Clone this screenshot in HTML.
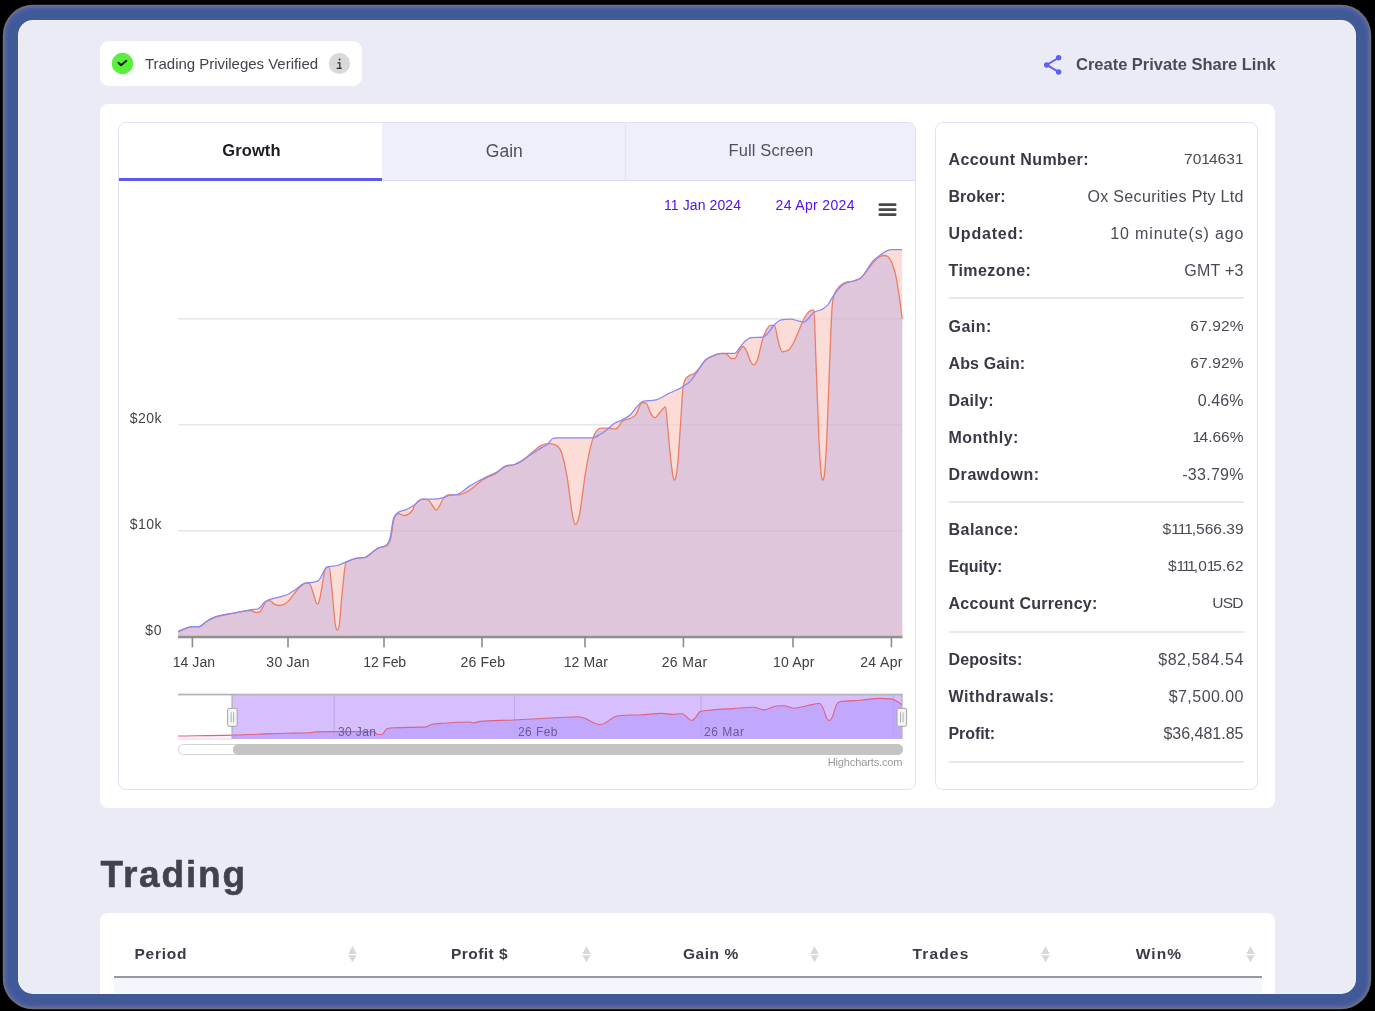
<!DOCTYPE html>
<html>
<head>
<meta charset="utf-8">
<title>Trading Dashboard</title>
<style>
*{box-sizing:border-box;margin:0;padding:0}
html,body{width:1375px;height:1011px;overflow:hidden;background:#000;font-family:"Liberation Sans",sans-serif;}
.abs{position:absolute}
#frame{position:absolute;left:5.5px;top:7.5px;width:1362px;height:998.5px;background:#3f5a97;border-radius:27px;box-shadow:inset 0 0 0 2px #4d5aa6,0 0 0 1.5px #5a6496,0 0 0 3.2px #67717f;}
#screen{position:absolute;left:18px;top:20px;width:1338px;height:974px;background:#eaebf5;border-radius:15px;overflow:hidden;}
#screen:after{content:'';position:absolute;left:0;top:0;right:0;bottom:0;border-radius:15px;box-shadow:inset 0 0 0 1px rgba(255,255,255,0.3);pointer-events:none}
/* coordinates inside #screen are page coords minus (18,20); use wrapper shifting */
#page{position:absolute;left:-18px;top:-20px;width:1375px;height:1011px;filter:blur(0.4px);}
.card{position:absolute;background:#fff;border-radius:9px;}
.t{position:absolute;white-space:nowrap;line-height:1;}
.lbl{font-weight:bold;color:#34353f;font-size:15px;}
.val{color:#44454f;font-size:15.5px;text-align:right;}
.hr{position:absolute;left:948.5px;width:295.5px;height:2px;background:#e9e9ed;}
.th{font-weight:bold;color:#3a3b46;font-size:15px;}
</style>
</head>
<body>
<div id="frame"></div>
<div id="screen"><div id="page">

<!-- verified badge -->
<div class="card" style="left:100px;top:41px;width:262px;height:45px;border-radius:9px"></div>
<svg class="abs" style="left:111px;top:52px" width="23" height="23" viewBox="0 0 23 23">
  <circle cx="11.5" cy="11.5" r="10.7" fill="#58f03a"/>
  <path d="M7.5 10.8 L10 13.3 L15.3 8.8" fill="none" stroke="#0c1a0a" stroke-width="2" stroke-linecap="round" stroke-linejoin="round"/>
</svg>
<svg class="abs" style="left:328px;top:52px" width="23" height="23" viewBox="0 0 23 23">
  <circle cx="11.5" cy="11.5" r="10.6" fill="#d9d9d9"/>
  <path d="M9.5 10.8 H11.8 V16.3 M8.6 16.4 H13.8" fill="none" stroke="#2c2c38" stroke-width="1.3"/>
  <circle cx="11.6" cy="7.5" r="0.95" fill="#2c2c38"/>
</svg>

<!-- share link -->
<svg class="abs" style="left:1042px;top:53px" width="22" height="23" viewBox="0 0 22 23">
  <path d="M16.6 4.8 L4.7 11.9 L16.6 18.9" fill="none" stroke="#5e5efa" stroke-width="1.9"/>
  <circle cx="16.6" cy="4.8" r="2.75" fill="#5e5efa"/>
  <circle cx="4.7" cy="11.9" r="2.75" fill="#5e5efa"/>
  <circle cx="16.6" cy="18.9" r="2.75" fill="#5e5efa"/>
</svg>

<!-- main card -->
<div class="card" style="left:100px;top:104px;width:1175px;height:704px;border-radius:8px"></div>

<!-- chart panel -->
<div class="abs" style="left:118px;top:122px;width:798px;height:668px;border:1px solid #e2dffc;border-radius:8px;overflow:hidden;background:#fff">
  <div class="abs" style="left:0;top:0;width:796px;height:58px;background:#efeffa;border-bottom:1px solid #dddcfb"></div>
  <div class="abs" style="left:0;top:0;width:263px;height:58px;background:#fff;border-bottom:3px solid #5a59f6"></div>
  <div class="abs" style="left:506px;top:0;width:1px;height:57px;background:#e2e1f6"></div>
</div>

<svg class="abs" style="left:0;top:0" width="1375" height="1011" viewBox="0 0 1375 1011">
<rect x="178" y="318.2" width="724" height="1.3" fill="#ededef"/>
<rect x="178" y="424.2" width="724" height="1.3" fill="#ededef"/>
<rect x="178" y="530.2" width="724" height="1.3" fill="#ededef"/>
<path d="M178.2 631.3C180.9 630.3 183.7 629.0 186.4 628.2C188.5 627.6 190.6 626.7 192.7 626.7C194.8 626.7 197.0 626.7 199.1 626.7C201.5 626.7 204.0 623.0 206.4 621.5C209.4 619.6 212.5 617.9 215.5 616.7C218.5 615.5 221.5 615.1 224.5 614.5C227.5 613.9 230.6 613.6 233.6 613.1C236.2 612.6 238.7 612.1 241.3 611.6C244.7 611.0 248.1 610.2 251.5 609.7C253.5 609.4 255.6 609.5 257.6 609.0C258.6 608.8 259.6 608.0 260.6 607.0C261.6 606.0 262.7 604.0 263.7 602.9C264.7 601.9 265.7 601.3 266.7 600.7C268.4 599.7 270.1 599.4 271.8 598.8C275.2 597.7 278.6 597.4 282.0 596.3C284.4 595.6 286.7 594.9 289.1 593.7C291.2 592.6 293.2 591.1 295.3 589.7C297.3 588.3 299.4 586.3 301.4 585.1C303.1 584.1 304.7 583.2 306.4 582.9C308.2 582.6 310.0 582.7 311.8 582.4C313.9 582.1 316.1 581.9 318.2 580.9C319.7 580.2 321.2 576.1 322.7 573.6C323.9 571.5 325.2 567.9 326.4 567.3C327.6 566.7 328.8 566.6 330.0 566.4C332.4 565.9 334.9 566.1 337.3 565.5C340.3 564.8 343.4 563.0 346.4 561.8C349.4 560.6 352.5 559.2 355.5 558.5C358.8 557.7 362.2 558.1 365.5 557.3C367.6 556.8 369.7 554.2 371.8 552.7C374.2 551.0 376.7 548.8 379.1 547.6C381.2 546.6 383.4 547.0 385.5 545.8C387.0 545.0 388.5 543.3 390.0 538.2C391.2 534.1 392.4 521.5 393.6 518.2C394.8 514.8 396.1 514.1 397.3 513.1C400.3 510.7 403.4 511.0 406.4 509.5C408.8 508.3 411.2 507.0 413.6 505.5C416.6 503.6 419.7 499.1 422.7 499.1C426.0 499.1 429.4 499.1 432.7 499.1C436.0 499.1 439.4 498.7 442.7 497.8C444.8 497.2 447.0 496.1 449.1 495.5C452.1 494.7 455.2 495.0 458.2 494.0C461.8 492.8 465.5 488.7 469.1 486.4C473.9 483.3 478.8 480.7 483.6 478.2C487.9 476.0 492.1 474.6 496.4 472.2C499.4 470.5 502.5 467.7 505.5 466.4C508.5 465.1 511.5 465.6 514.5 464.5C516.9 463.6 519.4 462.3 521.8 460.9C524.8 459.1 527.9 456.5 530.9 454.5C534.5 452.1 538.2 449.9 541.8 447.6C543.9 446.3 546.1 445.6 548.2 443.6C549.7 442.2 551.2 439.1 552.7 438.5C553.9 438.0 555.2 437.8 556.4 437.8C568.5 437.8 580.6 437.8 592.7 437.8C595.1 437.8 597.6 435.9 600.0 434.5C602.4 433.1 604.9 431.4 607.3 429.5C609.7 427.6 612.1 424.9 614.5 423.3C616.9 421.7 619.4 421.3 621.8 420.0C624.8 418.4 627.9 417.2 630.9 414.2C632.9 412.2 634.9 408.9 636.9 406.8C638.9 404.7 640.9 401.7 642.9 401.3C647.2 400.4 651.4 400.8 655.7 399.9C660.3 398.9 665.0 395.2 669.6 393.0C673.9 390.9 678.1 389.8 682.4 387.0C685.4 385.1 688.3 383.5 691.3 380.1C693.6 377.5 695.9 373.5 698.2 370.2C700.5 366.9 702.9 362.7 705.2 360.3C707.8 357.6 710.5 356.9 713.1 355.8C716.1 354.5 719.0 353.4 722.0 353.4C726.3 353.4 730.5 353.4 734.8 353.4C736.5 353.4 738.1 349.5 739.8 347.5C741.4 345.5 743.1 343.1 744.7 341.5C747.0 339.3 749.3 337.8 751.6 337.6C755.2 337.3 758.9 337.5 762.5 337.2C764.5 337.1 766.4 334.7 768.4 332.6C770.4 330.5 772.4 326.8 774.4 324.7C776.7 322.3 779.0 320.1 781.3 319.8C784.3 319.4 787.2 319.2 790.2 319.2C792.8 319.2 795.5 320.2 798.1 320.8C800.1 321.2 802.0 322.2 804.0 322.2C805.7 322.2 807.3 319.5 809.0 317.8C810.6 316.2 812.3 313.4 813.9 312.3C816.6 310.4 819.2 311.1 821.9 309.5C823.9 308.3 825.8 307.3 827.8 304.9C829.7 302.7 831.5 298.6 833.4 295.9C835.4 293.0 837.3 290.2 839.3 288.1C841.7 285.6 844.1 284.0 846.5 282.8C848.9 281.6 851.2 281.8 853.6 281.0C856.0 280.2 858.3 280.0 860.7 278.1C862.7 276.5 864.6 273.1 866.6 270.3C868.6 267.5 870.6 263.8 872.6 261.4C875.0 258.6 877.3 257.3 879.7 255.5C882.1 253.7 884.4 251.8 886.8 250.8C888.4 250.1 889.9 249.6 891.5 249.6C895.1 249.6 898.6 249.6 902.2 249.6L902.2 636.0L178.2 636.0Z" fill="#fbdcd7"/>
<path d="M178.2 631.8C180.9 630.6 183.7 629.1 186.4 628.2C188.5 627.5 190.6 626.7 192.7 626.7C194.8 626.7 197.0 626.7 199.1 626.7C201.5 626.7 204.0 623.0 206.4 621.5C209.4 619.7 212.5 618.3 215.5 617.2C218.5 616.1 221.5 615.7 224.5 615.0C227.5 614.3 230.6 613.7 233.6 613.1C236.2 612.6 238.7 612.0 241.3 611.6C244.3 611.1 247.4 610.5 250.4 610.5C252.5 610.5 254.5 612.6 256.6 612.6C257.8 612.6 258.9 612.3 260.1 611.6C261.0 611.1 261.8 609.0 262.7 607.5C263.5 606.1 264.4 604.0 265.2 602.9C266.0 601.9 266.7 600.9 267.5 600.9C268.4 600.9 269.4 600.9 270.3 600.9C271.5 600.9 272.7 603.2 273.9 603.9C275.6 605.0 277.3 605.5 279.0 605.5C280.7 605.5 282.3 605.1 284.0 604.4C285.7 603.7 287.4 602.2 289.1 600.4C290.6 598.8 292.2 596.2 293.7 594.3C295.2 592.3 296.8 590.4 298.3 588.7C299.7 587.2 301.0 585.6 302.4 584.6C303.4 583.9 304.4 583.1 305.4 583.1C306.6 583.1 307.9 583.2 309.1 583.4C310.6 583.6 312.0 589.7 313.5 594.0C314.4 596.7 315.3 601.3 316.2 602.8C316.7 603.5 317.1 604.0 317.6 604.0C318.0 604.0 318.5 603.4 318.9 602.3C319.8 600.2 320.6 594.4 321.5 590.0C322.8 583.3 324.2 569.2 325.5 568.2C326.7 567.3 327.9 566.9 329.1 566.9C330.1 566.9 331.0 581.4 332.0 590.0C333.2 600.9 334.5 622.4 335.7 627.0C336.2 629.0 336.8 630.0 337.3 630.0C337.8 630.0 338.3 629.0 338.9 627.0C339.9 622.9 341.0 604.7 342.0 595.0C343.3 582.7 344.7 563.9 346.0 562.7C349.2 559.9 352.3 559.3 355.5 558.5C358.8 557.7 362.2 558.1 365.5 557.3C367.6 556.8 369.7 554.2 371.8 552.7C374.2 551.0 376.7 548.4 379.1 547.6C381.2 546.9 383.4 547.2 385.5 546.5C387.2 545.9 388.8 544.0 390.5 539.0C391.7 535.5 392.8 522.0 394.0 519.0C395.4 515.4 396.8 513.6 398.2 513.6C400.3 513.6 402.4 515.5 404.5 515.5C407.2 515.5 410.0 513.7 412.7 510.0C413.3 509.2 413.9 506.4 414.5 505.5C417.2 501.2 420.0 499.1 422.7 499.1C424.5 499.1 426.4 499.4 428.2 500.0C430.4 500.7 432.6 506.9 434.8 508.8C435.3 509.3 435.9 510.0 436.4 510.0C436.9 510.0 437.5 509.2 438.0 508.6C439.9 506.5 441.7 500.5 443.6 498.2C445.1 496.3 446.7 494.9 448.2 494.9C451.5 494.9 454.9 494.9 458.2 494.9C461.8 494.9 465.5 492.6 469.1 490.5C473.9 487.8 478.8 482.1 483.6 479.1C487.9 476.5 492.1 475.9 496.4 473.1C499.4 471.1 502.5 467.0 505.5 466.0C508.5 465.0 511.5 465.5 514.5 464.5C516.9 463.7 519.4 462.4 521.8 460.9C524.8 459.0 527.9 455.9 530.9 453.5C534.5 450.6 538.2 446.7 541.8 445.1C543.9 444.2 546.1 443.6 548.2 443.6C550.3 443.6 552.4 443.9 554.5 444.5C556.3 445.0 558.2 446.0 560.0 449.1C562.4 453.2 564.9 464.2 567.3 478.2C569.1 488.6 570.9 508.0 572.7 516.4C573.3 519.3 574.0 522.3 574.6 523.5C574.9 524.1 575.2 524.5 575.5 524.5C575.9 524.5 576.3 524.1 576.7 523.5C577.5 522.3 578.3 519.6 579.1 516.4C581.2 507.8 583.4 485.1 585.5 472.7C587.9 458.8 590.3 446.4 592.7 439.1C593.9 435.3 595.2 432.4 596.4 430.9C597.9 429.1 599.4 428.2 600.9 428.2C603.0 428.2 605.2 428.2 607.3 428.2C610.0 428.2 612.8 429.1 615.5 429.1C617.9 429.1 620.3 422.6 622.7 420.9C626.0 418.5 629.4 419.6 632.7 417.3C633.8 416.6 634.8 416.0 635.9 414.7C637.9 412.3 639.9 402.8 641.9 402.8C643.2 402.8 644.5 402.8 645.8 402.8C647.5 402.8 649.1 411.1 650.8 413.7C652.1 415.7 653.4 417.7 654.7 417.7C656.4 417.7 658.0 414.4 659.7 412.7C661.7 410.7 663.6 406.8 665.6 406.8C666.3 406.8 666.9 419.9 667.6 426.6C668.9 439.6 670.2 456.4 671.5 466.1C672.2 471.1 672.8 476.2 673.5 478.3C673.8 479.4 674.2 480.0 674.5 480.0C674.8 480.0 675.2 479.4 675.5 478.3C676.2 476.2 676.8 472.2 677.5 466.1C678.5 457.2 679.4 440.4 680.4 426.6C681.3 414.2 682.1 394.4 683.0 388.0C683.8 382.1 684.6 380.5 685.4 379.1C686.7 376.8 688.0 376.5 689.3 375.6C691.0 374.5 692.6 374.9 694.3 373.6C695.9 372.4 697.6 370.2 699.2 368.2C701.2 365.8 703.2 362.3 705.2 360.3C707.8 357.7 710.5 356.9 713.1 355.8C716.1 354.5 719.0 353.4 722.0 353.4C723.6 353.4 725.3 353.7 726.9 354.4C728.2 354.9 729.6 358.0 730.9 358.3C732.2 358.6 733.5 358.7 734.8 358.7C736.1 358.7 737.5 353.4 738.8 351.4C740.2 349.3 741.7 346.5 743.1 346.5C744.3 346.5 745.5 349.1 746.7 351.4C748.0 353.9 749.3 359.0 750.6 361.3C751.6 363.1 752.6 364.9 753.6 364.9C754.9 364.9 756.3 362.7 757.6 359.3C759.2 355.1 760.9 344.8 762.5 339.6C763.8 335.4 765.2 332.1 766.5 329.7C767.8 327.4 769.1 325.3 770.4 325.3C771.7 325.3 773.1 325.3 774.4 325.3C775.7 325.3 777.0 337.1 778.3 341.5C779.6 346.0 781.0 351.8 782.3 351.8C784.3 351.8 786.2 351.3 788.2 350.4C790.2 349.5 792.2 345.3 794.2 341.5C796.2 337.7 798.1 332.2 800.1 327.7C801.7 324.0 803.4 319.6 805.0 316.8C806.7 314.0 808.3 311.8 810.0 310.9C811.3 310.2 812.6 309.9 813.9 309.9C814.6 309.9 815.2 342.4 815.9 359.3C816.9 384.7 817.9 418.2 818.9 438.4C819.8 456.0 820.6 472.9 821.5 477.0C821.9 479.0 822.4 480.0 822.8 480.0C823.2 480.0 823.7 479.0 824.1 477.0C825.0 472.9 825.9 456.3 826.8 438.4C827.8 418.4 828.8 383.4 829.8 359.3C830.6 340.0 831.4 315.3 832.2 305.9C832.8 298.8 833.4 297.7 834.0 295.3C835.0 291.3 836.0 290.9 837.0 289.3C838.6 286.8 840.1 285.8 841.7 284.6C843.3 283.4 844.9 282.7 846.5 282.2C848.9 281.4 851.2 281.7 853.6 281.0C856.0 280.3 858.3 280.0 860.7 278.1C862.7 276.5 864.6 273.5 866.6 271.0C868.6 268.5 870.6 265.4 872.6 263.2C875.0 260.5 877.3 257.9 879.7 256.7C881.3 255.9 882.8 255.5 884.4 255.5C885.6 255.5 886.8 255.9 888.0 256.7C889.2 257.5 890.3 259.4 891.5 262.0C892.7 264.7 893.9 267.6 895.1 272.7C896.3 277.8 897.5 285.0 898.7 292.9C899.9 300.5 901.0 310.3 902.2 319.0L902.2 636.0L178.2 636.0Z" fill="#dfc6da"/>
<rect x="178" y="318.2" width="724" height="1.3" fill="#000" opacity="0.04"/>
<rect x="178" y="424.2" width="724" height="1.3" fill="#000" opacity="0.04"/>
<rect x="178" y="530.2" width="724" height="1.3" fill="#000" opacity="0.04"/>
<path d="M178.2 631.8C180.9 630.6 183.7 629.1 186.4 628.2C188.5 627.5 190.6 626.7 192.7 626.7C194.8 626.7 197.0 626.7 199.1 626.7C201.5 626.7 204.0 623.0 206.4 621.5C209.4 619.7 212.5 618.3 215.5 617.2C218.5 616.1 221.5 615.7 224.5 615.0C227.5 614.3 230.6 613.7 233.6 613.1C236.2 612.6 238.7 612.0 241.3 611.6C244.3 611.1 247.4 610.5 250.4 610.5C252.5 610.5 254.5 612.6 256.6 612.6C257.8 612.6 258.9 612.3 260.1 611.6C261.0 611.1 261.8 609.0 262.7 607.5C263.5 606.1 264.4 604.0 265.2 602.9C266.0 601.9 266.7 600.9 267.5 600.9C268.4 600.9 269.4 600.9 270.3 600.9C271.5 600.9 272.7 603.2 273.9 603.9C275.6 605.0 277.3 605.5 279.0 605.5C280.7 605.5 282.3 605.1 284.0 604.4C285.7 603.7 287.4 602.2 289.1 600.4C290.6 598.8 292.2 596.2 293.7 594.3C295.2 592.3 296.8 590.4 298.3 588.7C299.7 587.2 301.0 585.6 302.4 584.6C303.4 583.9 304.4 583.1 305.4 583.1C306.6 583.1 307.9 583.2 309.1 583.4C310.6 583.6 312.0 589.7 313.5 594.0C314.4 596.7 315.3 601.3 316.2 602.8C316.7 603.5 317.1 604.0 317.6 604.0C318.0 604.0 318.5 603.4 318.9 602.3C319.8 600.2 320.6 594.4 321.5 590.0C322.8 583.3 324.2 569.2 325.5 568.2C326.7 567.3 327.9 566.9 329.1 566.9C330.1 566.9 331.0 581.4 332.0 590.0C333.2 600.9 334.5 622.4 335.7 627.0C336.2 629.0 336.8 630.0 337.3 630.0C337.8 630.0 338.3 629.0 338.9 627.0C339.9 622.9 341.0 604.7 342.0 595.0C343.3 582.7 344.7 563.9 346.0 562.7C349.2 559.9 352.3 559.3 355.5 558.5C358.8 557.7 362.2 558.1 365.5 557.3C367.6 556.8 369.7 554.2 371.8 552.7C374.2 551.0 376.7 548.4 379.1 547.6C381.2 546.9 383.4 547.2 385.5 546.5C387.2 545.9 388.8 544.0 390.5 539.0C391.7 535.5 392.8 522.0 394.0 519.0C395.4 515.4 396.8 513.6 398.2 513.6C400.3 513.6 402.4 515.5 404.5 515.5C407.2 515.5 410.0 513.7 412.7 510.0C413.3 509.2 413.9 506.4 414.5 505.5C417.2 501.2 420.0 499.1 422.7 499.1C424.5 499.1 426.4 499.4 428.2 500.0C430.4 500.7 432.6 506.9 434.8 508.8C435.3 509.3 435.9 510.0 436.4 510.0C436.9 510.0 437.5 509.2 438.0 508.6C439.9 506.5 441.7 500.5 443.6 498.2C445.1 496.3 446.7 494.9 448.2 494.9C451.5 494.9 454.9 494.9 458.2 494.9C461.8 494.9 465.5 492.6 469.1 490.5C473.9 487.8 478.8 482.1 483.6 479.1C487.9 476.5 492.1 475.9 496.4 473.1C499.4 471.1 502.5 467.0 505.5 466.0C508.5 465.0 511.5 465.5 514.5 464.5C516.9 463.7 519.4 462.4 521.8 460.9C524.8 459.0 527.9 455.9 530.9 453.5C534.5 450.6 538.2 446.7 541.8 445.1C543.9 444.2 546.1 443.6 548.2 443.6C550.3 443.6 552.4 443.9 554.5 444.5C556.3 445.0 558.2 446.0 560.0 449.1C562.4 453.2 564.9 464.2 567.3 478.2C569.1 488.6 570.9 508.0 572.7 516.4C573.3 519.3 574.0 522.3 574.6 523.5C574.9 524.1 575.2 524.5 575.5 524.5C575.9 524.5 576.3 524.1 576.7 523.5C577.5 522.3 578.3 519.6 579.1 516.4C581.2 507.8 583.4 485.1 585.5 472.7C587.9 458.8 590.3 446.4 592.7 439.1C593.9 435.3 595.2 432.4 596.4 430.9C597.9 429.1 599.4 428.2 600.9 428.2C603.0 428.2 605.2 428.2 607.3 428.2C610.0 428.2 612.8 429.1 615.5 429.1C617.9 429.1 620.3 422.6 622.7 420.9C626.0 418.5 629.4 419.6 632.7 417.3C633.8 416.6 634.8 416.0 635.9 414.7C637.9 412.3 639.9 402.8 641.9 402.8C643.2 402.8 644.5 402.8 645.8 402.8C647.5 402.8 649.1 411.1 650.8 413.7C652.1 415.7 653.4 417.7 654.7 417.7C656.4 417.7 658.0 414.4 659.7 412.7C661.7 410.7 663.6 406.8 665.6 406.8C666.3 406.8 666.9 419.9 667.6 426.6C668.9 439.6 670.2 456.4 671.5 466.1C672.2 471.1 672.8 476.2 673.5 478.3C673.8 479.4 674.2 480.0 674.5 480.0C674.8 480.0 675.2 479.4 675.5 478.3C676.2 476.2 676.8 472.2 677.5 466.1C678.5 457.2 679.4 440.4 680.4 426.6C681.3 414.2 682.1 394.4 683.0 388.0C683.8 382.1 684.6 380.5 685.4 379.1C686.7 376.8 688.0 376.5 689.3 375.6C691.0 374.5 692.6 374.9 694.3 373.6C695.9 372.4 697.6 370.2 699.2 368.2C701.2 365.8 703.2 362.3 705.2 360.3C707.8 357.7 710.5 356.9 713.1 355.8C716.1 354.5 719.0 353.4 722.0 353.4C723.6 353.4 725.3 353.7 726.9 354.4C728.2 354.9 729.6 358.0 730.9 358.3C732.2 358.6 733.5 358.7 734.8 358.7C736.1 358.7 737.5 353.4 738.8 351.4C740.2 349.3 741.7 346.5 743.1 346.5C744.3 346.5 745.5 349.1 746.7 351.4C748.0 353.9 749.3 359.0 750.6 361.3C751.6 363.1 752.6 364.9 753.6 364.9C754.9 364.9 756.3 362.7 757.6 359.3C759.2 355.1 760.9 344.8 762.5 339.6C763.8 335.4 765.2 332.1 766.5 329.7C767.8 327.4 769.1 325.3 770.4 325.3C771.7 325.3 773.1 325.3 774.4 325.3C775.7 325.3 777.0 337.1 778.3 341.5C779.6 346.0 781.0 351.8 782.3 351.8C784.3 351.8 786.2 351.3 788.2 350.4C790.2 349.5 792.2 345.3 794.2 341.5C796.2 337.7 798.1 332.2 800.1 327.7C801.7 324.0 803.4 319.6 805.0 316.8C806.7 314.0 808.3 311.8 810.0 310.9C811.3 310.2 812.6 309.9 813.9 309.9C814.6 309.9 815.2 342.4 815.9 359.3C816.9 384.7 817.9 418.2 818.9 438.4C819.8 456.0 820.6 472.9 821.5 477.0C821.9 479.0 822.4 480.0 822.8 480.0C823.2 480.0 823.7 479.0 824.1 477.0C825.0 472.9 825.9 456.3 826.8 438.4C827.8 418.4 828.8 383.4 829.8 359.3C830.6 340.0 831.4 315.3 832.2 305.9C832.8 298.8 833.4 297.7 834.0 295.3C835.0 291.3 836.0 290.9 837.0 289.3C838.6 286.8 840.1 285.8 841.7 284.6C843.3 283.4 844.9 282.7 846.5 282.2C848.9 281.4 851.2 281.7 853.6 281.0C856.0 280.3 858.3 280.0 860.7 278.1C862.7 276.5 864.6 273.5 866.6 271.0C868.6 268.5 870.6 265.4 872.6 263.2C875.0 260.5 877.3 257.9 879.7 256.7C881.3 255.9 882.8 255.5 884.4 255.5C885.6 255.5 886.8 255.9 888.0 256.7C889.2 257.5 890.3 259.4 891.5 262.0C892.7 264.7 893.9 267.6 895.1 272.7C896.3 277.8 897.5 285.0 898.7 292.9C899.9 300.5 901.0 310.3 902.2 319.0" fill="none" stroke="#ec7d67" stroke-width="1.3" stroke-linejoin="round"/>
<path d="M178.2 631.3C180.9 630.3 183.7 629.0 186.4 628.2C188.5 627.6 190.6 626.7 192.7 626.7C194.8 626.7 197.0 626.7 199.1 626.7C201.5 626.7 204.0 623.0 206.4 621.5C209.4 619.6 212.5 617.9 215.5 616.7C218.5 615.5 221.5 615.1 224.5 614.5C227.5 613.9 230.6 613.6 233.6 613.1C236.2 612.6 238.7 612.1 241.3 611.6C244.7 611.0 248.1 610.2 251.5 609.7C253.5 609.4 255.6 609.5 257.6 609.0C258.6 608.8 259.6 608.0 260.6 607.0C261.6 606.0 262.7 604.0 263.7 602.9C264.7 601.9 265.7 601.3 266.7 600.7C268.4 599.7 270.1 599.4 271.8 598.8C275.2 597.7 278.6 597.4 282.0 596.3C284.4 595.6 286.7 594.9 289.1 593.7C291.2 592.6 293.2 591.1 295.3 589.7C297.3 588.3 299.4 586.3 301.4 585.1C303.1 584.1 304.7 583.2 306.4 582.9C308.2 582.6 310.0 582.7 311.8 582.4C313.9 582.1 316.1 581.9 318.2 580.9C319.7 580.2 321.2 576.1 322.7 573.6C323.9 571.5 325.2 567.9 326.4 567.3C327.6 566.7 328.8 566.6 330.0 566.4C332.4 565.9 334.9 566.1 337.3 565.5C340.3 564.8 343.4 563.0 346.4 561.8C349.4 560.6 352.5 559.2 355.5 558.5C358.8 557.7 362.2 558.1 365.5 557.3C367.6 556.8 369.7 554.2 371.8 552.7C374.2 551.0 376.7 548.8 379.1 547.6C381.2 546.6 383.4 547.0 385.5 545.8C387.0 545.0 388.5 543.3 390.0 538.2C391.2 534.1 392.4 521.5 393.6 518.2C394.8 514.8 396.1 514.1 397.3 513.1C400.3 510.7 403.4 511.0 406.4 509.5C408.8 508.3 411.2 507.0 413.6 505.5C416.6 503.6 419.7 499.1 422.7 499.1C426.0 499.1 429.4 499.1 432.7 499.1C436.0 499.1 439.4 498.7 442.7 497.8C444.8 497.2 447.0 496.1 449.1 495.5C452.1 494.7 455.2 495.0 458.2 494.0C461.8 492.8 465.5 488.7 469.1 486.4C473.9 483.3 478.8 480.7 483.6 478.2C487.9 476.0 492.1 474.6 496.4 472.2C499.4 470.5 502.5 467.7 505.5 466.4C508.5 465.1 511.5 465.6 514.5 464.5C516.9 463.6 519.4 462.3 521.8 460.9C524.8 459.1 527.9 456.5 530.9 454.5C534.5 452.1 538.2 449.9 541.8 447.6C543.9 446.3 546.1 445.6 548.2 443.6C549.7 442.2 551.2 439.1 552.7 438.5C553.9 438.0 555.2 437.8 556.4 437.8C568.5 437.8 580.6 437.8 592.7 437.8C595.1 437.8 597.6 435.9 600.0 434.5C602.4 433.1 604.9 431.4 607.3 429.5C609.7 427.6 612.1 424.9 614.5 423.3C616.9 421.7 619.4 421.3 621.8 420.0C624.8 418.4 627.9 417.2 630.9 414.2C632.9 412.2 634.9 408.9 636.9 406.8C638.9 404.7 640.9 401.7 642.9 401.3C647.2 400.4 651.4 400.8 655.7 399.9C660.3 398.9 665.0 395.2 669.6 393.0C673.9 390.9 678.1 389.8 682.4 387.0C685.4 385.1 688.3 383.5 691.3 380.1C693.6 377.5 695.9 373.5 698.2 370.2C700.5 366.9 702.9 362.7 705.2 360.3C707.8 357.6 710.5 356.9 713.1 355.8C716.1 354.5 719.0 353.4 722.0 353.4C726.3 353.4 730.5 353.4 734.8 353.4C736.5 353.4 738.1 349.5 739.8 347.5C741.4 345.5 743.1 343.1 744.7 341.5C747.0 339.3 749.3 337.8 751.6 337.6C755.2 337.3 758.9 337.5 762.5 337.2C764.5 337.1 766.4 334.7 768.4 332.6C770.4 330.5 772.4 326.8 774.4 324.7C776.7 322.3 779.0 320.1 781.3 319.8C784.3 319.4 787.2 319.2 790.2 319.2C792.8 319.2 795.5 320.2 798.1 320.8C800.1 321.2 802.0 322.2 804.0 322.2C805.7 322.2 807.3 319.5 809.0 317.8C810.6 316.2 812.3 313.4 813.9 312.3C816.6 310.4 819.2 311.1 821.9 309.5C823.9 308.3 825.8 307.3 827.8 304.9C829.7 302.7 831.5 298.6 833.4 295.9C835.4 293.0 837.3 290.2 839.3 288.1C841.7 285.6 844.1 284.0 846.5 282.8C848.9 281.6 851.2 281.8 853.6 281.0C856.0 280.2 858.3 280.0 860.7 278.1C862.7 276.5 864.6 273.1 866.6 270.3C868.6 267.5 870.6 263.8 872.6 261.4C875.0 258.6 877.3 257.3 879.7 255.5C882.1 253.7 884.4 251.8 886.8 250.8C888.4 250.1 889.9 249.6 891.5 249.6C895.1 249.6 898.6 249.6 902.2 249.6" fill="none" stroke="#8988f3" stroke-width="1.25" stroke-linejoin="round"/>
<rect x="178" y="635.8" width="724.5" height="2.5" fill="#909090"/>
<rect x="191.6" y="636" width="1.6" height="11.3" fill="#8c8c8c"/>
<rect x="287.2" y="636" width="1.6" height="11.3" fill="#8c8c8c"/>
<rect x="383.2" y="636" width="1.6" height="11.3" fill="#8c8c8c"/>
<rect x="481.2" y="636" width="1.6" height="11.3" fill="#8c8c8c"/>
<rect x="584.2" y="636" width="1.6" height="11.3" fill="#8c8c8c"/>
<rect x="682.6" y="636" width="1.6" height="11.3" fill="#8c8c8c"/>
<rect x="792.2" y="636" width="1.6" height="11.3" fill="#8c8c8c"/>
<rect x="890.6" y="636" width="1.6" height="11.3" fill="#8c8c8c"/>
<rect x="178" y="694" width="724" height="45" fill="#fff"/>
<path d="M178.0 736.0C196.2 735.7 214.3 735.6 232.5 735.1C240.8 734.9 249.0 734.5 257.3 734.2C267.0 733.9 276.7 733.5 286.4 733.3C294.1 733.1 301.9 733.1 309.6 732.8C311.6 732.7 313.5 732.0 315.5 731.9C321.3 731.7 327.1 731.6 332.9 731.6C346.5 731.6 360.0 731.6 373.6 731.6C375.1 731.6 376.5 734.5 378.0 734.5C379.5 734.5 380.9 734.4 382.4 734.2C383.8 734.0 385.3 729.1 386.7 728.7C389.1 728.1 391.6 727.9 394.0 727.8C404.7 727.2 415.3 727.5 426.0 726.9C427.9 726.8 429.9 724.7 431.8 724.3C435.7 723.6 439.6 723.5 443.5 723.2C452.2 722.5 460.9 722.0 469.6 722.0C471.1 722.0 472.5 722.9 474.0 722.9C475.9 722.9 477.9 721.6 479.8 721.4C491.0 720.5 502.1 720.5 513.3 720.0C528.9 719.3 544.4 718.2 560.0 717.5C565.9 717.2 571.9 716.7 577.8 716.7C580.4 716.7 582.9 717.5 585.5 718.5C588.0 719.5 590.6 721.6 593.1 722.6C595.4 723.5 597.7 724.6 600.0 724.6C602.4 724.6 604.7 723.0 607.1 721.8C609.6 720.5 612.2 717.7 614.7 716.7C616.8 715.9 619.0 715.7 621.1 715.5C627.9 715.0 634.7 715.1 641.5 714.7C648.3 714.4 655.0 713.4 661.8 713.4C665.2 713.4 668.6 714.4 672.0 714.4C675.4 714.4 678.8 713.7 682.2 713.7C683.9 713.7 685.6 716.3 687.3 717.5C688.7 718.5 690.2 720.5 691.6 720.5C693.1 720.5 694.7 718.4 696.2 716.7C697.5 715.3 698.7 711.9 700.0 711.6C704.2 710.5 708.5 710.4 712.7 709.9C719.5 709.2 726.3 709.0 733.1 708.6C739.9 708.2 746.7 707.3 753.5 707.3C756.9 707.3 760.2 709.9 763.6 709.9C767.9 709.9 772.1 706.2 776.4 706.0C778.9 705.9 781.5 705.8 784.0 705.8C787.4 705.8 790.8 708.3 794.2 708.3C798.4 708.3 802.7 706.6 806.9 705.8C811.1 705.0 815.4 703.5 819.6 703.5C820.9 703.5 822.2 706.2 823.5 709.1C824.6 711.5 825.7 716.7 826.8 718.5C827.6 719.8 828.5 720.5 829.3 720.5C830.3 720.5 831.4 718.8 832.4 716.7C833.7 714.1 834.9 707.8 836.2 705.3C837.5 702.8 838.7 701.7 840.0 701.5C846.8 700.6 853.6 700.7 860.4 700.2C867.2 699.7 873.9 698.4 880.7 698.4C884.1 698.4 887.5 698.6 890.9 698.9C893.0 699.1 895.2 700.3 897.3 701.5C898.9 702.4 900.4 703.7 902.0 704.8L902.0 739.0L178.0 739.0Z" fill="#fbf4fa"/>
<rect x="232" y="694" width="670" height="45" fill="#d7befd"/>
<clipPath id="nc"><rect x="232" y="694" width="670" height="45"/></clipPath>
<path d="M178.0 736.0C196.2 735.7 214.3 735.6 232.5 735.1C240.8 734.9 249.0 734.5 257.3 734.2C267.0 733.9 276.7 733.5 286.4 733.3C294.1 733.1 301.9 733.1 309.6 732.8C311.6 732.7 313.5 732.0 315.5 731.9C321.3 731.7 327.1 731.6 332.9 731.6C346.5 731.6 360.0 731.6 373.6 731.6C375.1 731.6 376.5 734.5 378.0 734.5C379.5 734.5 380.9 734.4 382.4 734.2C383.8 734.0 385.3 729.1 386.7 728.7C389.1 728.1 391.6 727.9 394.0 727.8C404.7 727.2 415.3 727.5 426.0 726.9C427.9 726.8 429.9 724.7 431.8 724.3C435.7 723.6 439.6 723.5 443.5 723.2C452.2 722.5 460.9 722.0 469.6 722.0C471.1 722.0 472.5 722.9 474.0 722.9C475.9 722.9 477.9 721.6 479.8 721.4C491.0 720.5 502.1 720.5 513.3 720.0C528.9 719.3 544.4 718.2 560.0 717.5C565.9 717.2 571.9 716.7 577.8 716.7C580.4 716.7 582.9 717.5 585.5 718.5C588.0 719.5 590.6 721.6 593.1 722.6C595.4 723.5 597.7 724.6 600.0 724.6C602.4 724.6 604.7 723.0 607.1 721.8C609.6 720.5 612.2 717.7 614.7 716.7C616.8 715.9 619.0 715.7 621.1 715.5C627.9 715.0 634.7 715.1 641.5 714.7C648.3 714.4 655.0 713.4 661.8 713.4C665.2 713.4 668.6 714.4 672.0 714.4C675.4 714.4 678.8 713.7 682.2 713.7C683.9 713.7 685.6 716.3 687.3 717.5C688.7 718.5 690.2 720.5 691.6 720.5C693.1 720.5 694.7 718.4 696.2 716.7C697.5 715.3 698.7 711.9 700.0 711.6C704.2 710.5 708.5 710.4 712.7 709.9C719.5 709.2 726.3 709.0 733.1 708.6C739.9 708.2 746.7 707.3 753.5 707.3C756.9 707.3 760.2 709.9 763.6 709.9C767.9 709.9 772.1 706.2 776.4 706.0C778.9 705.9 781.5 705.8 784.0 705.8C787.4 705.8 790.8 708.3 794.2 708.3C798.4 708.3 802.7 706.6 806.9 705.8C811.1 705.0 815.4 703.5 819.6 703.5C820.9 703.5 822.2 706.2 823.5 709.1C824.6 711.5 825.7 716.7 826.8 718.5C827.6 719.8 828.5 720.5 829.3 720.5C830.3 720.5 831.4 718.8 832.4 716.7C833.7 714.1 834.9 707.8 836.2 705.3C837.5 702.8 838.7 701.7 840.0 701.5C846.8 700.6 853.6 700.7 860.4 700.2C867.2 699.7 873.9 698.4 880.7 698.4C884.1 698.4 887.5 698.6 890.9 698.9C893.0 699.1 895.2 700.3 897.3 701.5C898.9 702.4 900.4 703.7 902.0 704.8L902.0 739.0L178.0 739.0Z" fill="#c1a8fd" clip-path="url(#nc)"/>
<rect x="333.7" y="694" width="1" height="45" fill="#b9a3ea" opacity="0.8"/>
<rect x="514.0" y="694" width="1" height="45" fill="#b9a3ea" opacity="0.8"/>
<rect x="700.6" y="694" width="1" height="45" fill="#b9a3ea" opacity="0.8"/>
<rect x="893.0" y="694" width="1" height="45" fill="#b9a3ea" opacity="0.8"/>
<path d="M178.0 736.0C196.2 735.7 214.3 735.6 232.5 735.1C240.8 734.9 249.0 734.5 257.3 734.2C267.0 733.9 276.7 733.5 286.4 733.3C294.1 733.1 301.9 733.1 309.6 732.8C311.6 732.7 313.5 732.0 315.5 731.9C321.3 731.7 327.1 731.6 332.9 731.6C346.5 731.6 360.0 731.6 373.6 731.6C375.1 731.6 376.5 734.5 378.0 734.5C379.5 734.5 380.9 734.4 382.4 734.2C383.8 734.0 385.3 729.1 386.7 728.7C389.1 728.1 391.6 727.9 394.0 727.8C404.7 727.2 415.3 727.5 426.0 726.9C427.9 726.8 429.9 724.7 431.8 724.3C435.7 723.6 439.6 723.5 443.5 723.2C452.2 722.5 460.9 722.0 469.6 722.0C471.1 722.0 472.5 722.9 474.0 722.9C475.9 722.9 477.9 721.6 479.8 721.4C491.0 720.5 502.1 720.5 513.3 720.0C528.9 719.3 544.4 718.2 560.0 717.5C565.9 717.2 571.9 716.7 577.8 716.7C580.4 716.7 582.9 717.5 585.5 718.5C588.0 719.5 590.6 721.6 593.1 722.6C595.4 723.5 597.7 724.6 600.0 724.6C602.4 724.6 604.7 723.0 607.1 721.8C609.6 720.5 612.2 717.7 614.7 716.7C616.8 715.9 619.0 715.7 621.1 715.5C627.9 715.0 634.7 715.1 641.5 714.7C648.3 714.4 655.0 713.4 661.8 713.4C665.2 713.4 668.6 714.4 672.0 714.4C675.4 714.4 678.8 713.7 682.2 713.7C683.9 713.7 685.6 716.3 687.3 717.5C688.7 718.5 690.2 720.5 691.6 720.5C693.1 720.5 694.7 718.4 696.2 716.7C697.5 715.3 698.7 711.9 700.0 711.6C704.2 710.5 708.5 710.4 712.7 709.9C719.5 709.2 726.3 709.0 733.1 708.6C739.9 708.2 746.7 707.3 753.5 707.3C756.9 707.3 760.2 709.9 763.6 709.9C767.9 709.9 772.1 706.2 776.4 706.0C778.9 705.9 781.5 705.8 784.0 705.8C787.4 705.8 790.8 708.3 794.2 708.3C798.4 708.3 802.7 706.6 806.9 705.8C811.1 705.0 815.4 703.5 819.6 703.5C820.9 703.5 822.2 706.2 823.5 709.1C824.6 711.5 825.7 716.7 826.8 718.5C827.6 719.8 828.5 720.5 829.3 720.5C830.3 720.5 831.4 718.8 832.4 716.7C833.7 714.1 834.9 707.8 836.2 705.3C837.5 702.8 838.7 701.7 840.0 701.5C846.8 700.6 853.6 700.7 860.4 700.2C867.2 699.7 873.9 698.4 880.7 698.4C884.1 698.4 887.5 698.6 890.9 698.9C893.0 699.1 895.2 700.3 897.3 701.5C898.9 702.4 900.4 703.7 902.0 704.8" fill="none" stroke="#dc6482" stroke-width="1.1"/>
<rect x="178" y="693.7" width="724.5" height="1.7" fill="#b4b2ba"/>
<rect x="231.5" y="694" width="1" height="45" fill="#a9a9ad"/>
<rect x="901.5" y="694" width="1" height="45" fill="#a9a9ad"/>
<rect x="178" y="738.6" width="54" height="1" fill="#e8d6ea"/>
<rect x="227.6" y="708.3" width="9.6" height="18" rx="1.6" fill="#f4f4f4" stroke="#a4a4a4" stroke-width="1"/>
<rect x="230.7" y="712.3" width="0.9" height="10" fill="#a8a8a8"/>
<rect x="233.2" y="712.3" width="0.9" height="10" fill="#a8a8a8"/>
<rect x="897.0" y="708.3" width="9.6" height="18" rx="1.6" fill="#f4f4f4" stroke="#a4a4a4" stroke-width="1"/>
<rect x="900.1" y="712.3" width="0.9" height="10" fill="#a8a8a8"/>
<rect x="902.6" y="712.3" width="0.9" height="10" fill="#a8a8a8"/>
<rect x="178.5" y="744.5" width="724" height="10" rx="5" fill="#fff" stroke="#d4d4d4" stroke-width="1"/>
<rect x="233" y="744" width="670" height="11" rx="5.5" fill="#c4c4c4"/>
<rect x="878.5" y="203.2" width="18" height="2.8" rx="1.2" fill="#4a4a4a"/>
<rect x="878.5" y="208.2" width="18" height="2.8" rx="1.2" fill="#4a4a4a"/>
<rect x="878.5" y="213.2" width="18" height="2.8" rx="1.2" fill="#4a4a4a"/>
</svg>

<!-- stats panel -->
<div class="abs" style="left:934.5px;top:122px;width:323px;height:668px;border:1px solid #e2dffc;border-radius:8px;background:#fff"></div>
<div class="hr" style="top:297.0px"></div>
<div class="hr" style="top:501.3px"></div>
<div class="hr" style="top:630.7px"></div>
<div class="hr" style="top:761.0px"></div>

<!-- Trading -->
<div class="card" style="left:100px;top:913px;width:1174.5px;height:120px;border-radius:8px"></div>
<div class="abs" style="left:114px;top:977px;width:1147.5px;height:16px;background:#f3f5fd"></div>
<div class="abs" style="left:114px;top:976.2px;width:1147.5px;height:1.6px;background:#98989b"></div>
<svg class="abs" style="left:347.0px;top:944px" width="11" height="20" viewBox="0 0 11 20"><path d="M5.5 2 L9.7 10 H1.3 Z" fill="#d8d8db"/><path d="M5.5 18.3 L9.7 11.2 H1.3 Z" fill="#d8d8db"/></svg>
<svg class="abs" style="left:581.0px;top:944px" width="11" height="20" viewBox="0 0 11 20"><path d="M5.5 2 L9.7 10 H1.3 Z" fill="#d8d8db"/><path d="M5.5 18.3 L9.7 11.2 H1.3 Z" fill="#d8d8db"/></svg>
<svg class="abs" style="left:808.5px;top:944px" width="11" height="20" viewBox="0 0 11 20"><path d="M5.5 2 L9.7 10 H1.3 Z" fill="#d8d8db"/><path d="M5.5 18.3 L9.7 11.2 H1.3 Z" fill="#d8d8db"/></svg>
<svg class="abs" style="left:1039.5px;top:944px" width="11" height="20" viewBox="0 0 11 20"><path d="M5.5 2 L9.7 10 H1.3 Z" fill="#d8d8db"/><path d="M5.5 18.3 L9.7 11.2 H1.3 Z" fill="#d8d8db"/></svg>
<svg class="abs" style="left:1245.0px;top:944px" width="11" height="20" viewBox="0 0 11 20"><path d="M5.5 2 L9.7 10 H1.3 Z" fill="#d8d8db"/><path d="M5.5 18.3 L9.7 11.2 H1.3 Z" fill="#d8d8db"/></svg>
<div class="t" id="tpv" style="left:145.00px;top:56px;font-size:15px;color:#43444f;letter-spacing:-0.025px;">Trading Privileges Verified</div>
<div class="t" id="share" style="left:1076.00px;top:56px;font-size:16.5px;color:#4a4b58;font-weight:bold;letter-spacing:-0.011px;">Create Private Share Link</div>
<div class="t" id="tab1" style="left:222.20px;top:142px;font-size:16.5px;color:#1d1d24;font-weight:bold;letter-spacing:0.123px;">Growth</div>
<div class="t" id="tab2" style="left:485.80px;top:143px;font-size:17.5px;color:#50515c;letter-spacing:0.012px;">Gain</div>
<div class="t" id="tab3" style="left:728.50px;top:142px;font-size:16.5px;color:#50515c;letter-spacing:0.125px;">Full Screen</div>
<div class="t" id="trading" style="left:100.50px;top:856px;font-size:37px;color:#40424d;font-weight:bold;-webkit-text-stroke:0.55px #40424d;letter-spacing:1.825px;">Trading</div>
<div class="t" id="d1" style="left:664.00px;top:198px;font-size:14px;color:#5410ee;letter-spacing:0.102px;">11 Jan 2024</div>
<div class="t" id="d2" style="left:775.50px;top:198px;font-size:14px;color:#5410ee;letter-spacing:0.353px;">24 Apr 2024</div>
<div class="t" id="y0" style="right:1213.04px;top:411px;font-size:14px;color:#44454a;letter-spacing:0.464px;">$20k</div>
<div class="t" id="y1" style="right:1213.04px;top:517px;font-size:14px;color:#44454a;letter-spacing:0.464px;">$10k</div>
<div class="t" id="y2" style="right:1212.73px;top:623px;font-size:14px;color:#44454a;letter-spacing:0.772px;">$0</div>
<div class="t" id="x0" style="left:193.93px;transform:translateX(-50%);top:655px;font-size:14px;color:#3f4045;letter-spacing:0.061px;">14 Jan</div>
<div class="t" id="x1" style="left:288.12px;transform:translateX(-50%);top:655px;font-size:14px;color:#3f4045;letter-spacing:0.241px;">30 Jan</div>
<div class="t" id="x2" style="left:384.64px;transform:translateX(-50%);top:655px;font-size:14px;color:#3f4045;letter-spacing:-0.129px;">12 Feb</div>
<div class="t" id="x3" style="left:482.91px;transform:translateX(-50%);top:655px;font-size:14px;color:#3f4045;letter-spacing:0.211px;">26 Feb</div>
<div class="t" id="x4" style="left:585.88px;transform:translateX(-50%);top:655px;font-size:14px;color:#3f4045;letter-spacing:0.154px;">12 Mar</div>
<div class="t" id="x5" style="left:684.60px;transform:translateX(-50%);top:655px;font-size:14px;color:#3f4045;letter-spacing:0.394px;">26 Mar</div>
<div class="t" id="x6" style="left:793.90px;transform:translateX(-50%);top:655px;font-size:14px;color:#3f4045;letter-spacing:0.193px;">10 Apr</div>
<div class="t" id="x7" style="right:472.13px;top:655px;font-size:14px;color:#3f4045;letter-spacing:0.373px;">24 Apr</div>
<div class="t" id="n0" style="left:338.00px;top:726px;font-size:12px;color:#6b5a96;letter-spacing:0.374px;">30 Jan</div>
<div class="t" id="n1" style="left:518.00px;top:726px;font-size:12px;color:#6b5a96;letter-spacing:0.408px;">26 Feb</div>
<div class="t" id="n2" style="left:704.00px;top:726px;font-size:12px;color:#6b5a96;letter-spacing:0.508px;">26 Mar</div>
<div class="t" id="hc" style="right:472.62px;top:757px;font-size:11px;color:#9a9a9a;letter-spacing:-0.123px;">Highcharts.com</div>
<div class="t" id="l0" style="left:948.50px;top:152px;font-size:16px;color:#383944;font-weight:bold;letter-spacing:0.419px;">Account Number:</div>
<div class="t" id="v0" style="right:132.44px;top:151px;font-size:15.5px;color:#494a54;">70<span style="letter-spacing:-0.941px">1</span>463<span style="letter-spacing:-0.941px">1</span></div>
<div class="t" id="l1" style="left:948.50px;top:189px;font-size:16px;color:#383944;font-weight:bold;letter-spacing:0.032px;">Broker:</div>
<div class="t" id="v1" style="right:131.17px;top:189px;font-size:16px;color:#494a54;letter-spacing:0.333px;">Ox Securities Pty Ltd</div>
<div class="t" id="l2" style="left:948.50px;top:226px;font-size:16px;color:#383944;font-weight:bold;letter-spacing:0.796px;">Updated:</div>
<div class="t" id="v2" style="right:130.62px;top:226px;font-size:16px;color:#494a54;letter-spacing:0.880px;">10 minute(s) ago</div>
<div class="t" id="l3" style="left:948.50px;top:263px;font-size:16px;color:#383944;font-weight:bold;letter-spacing:0.446px;">Timezone:</div>
<div class="t" id="v3" style="right:131.26px;top:263px;font-size:16px;color:#494a54;letter-spacing:0.242px;">GMT +3</div>
<div class="t" id="l4" style="left:948.50px;top:319px;font-size:16px;color:#383944;font-weight:bold;letter-spacing:0.502px;">Gain:</div>
<div class="t" id="v4" style="right:131.38px;top:318px;font-size:15.5px;color:#494a54;letter-spacing:0.117px;">67.92%</div>
<div class="t" id="l5" style="left:948.50px;top:356px;font-size:16px;color:#383944;font-weight:bold;letter-spacing:0.142px;">Abs Gain:</div>
<div class="t" id="v5" style="right:131.38px;top:355px;font-size:15.5px;color:#494a54;letter-spacing:0.117px;">67.92%</div>
<div class="t" id="l6" style="left:948.50px;top:393px;font-size:16px;color:#383944;font-weight:bold;letter-spacing:0.284px;">Daily:</div>
<div class="t" id="v6" style="right:131.43px;top:393px;font-size:16px;color:#494a54;letter-spacing:0.073px;">0.46%</div>
<div class="t" id="l7" style="left:948.50px;top:430px;font-size:16px;color:#383944;font-weight:bold;letter-spacing:0.463px;">Monthly:</div>
<div class="t" id="v7" style="right:131.50px;top:429px;font-size:15.5px;color:#494a54;"><span style="letter-spacing:-1.516px">1</span>4.66%</div>
<div class="t" id="l8" style="left:948.50px;top:467px;font-size:16px;color:#383944;font-weight:bold;letter-spacing:0.560px;">Drawdown:</div>
<div class="t" id="v8" style="right:131.21px;top:467px;font-size:16px;color:#494a54;letter-spacing:0.294px;">-33.79%</div>
<div class="t" id="l9" style="left:948.50px;top:522px;font-size:16px;color:#383944;font-weight:bold;letter-spacing:0.471px;">Balance:</div>
<div class="t" id="v9" style="right:131.50px;top:521px;font-size:15.5px;color:#494a54;">$<span style="letter-spacing:-1.015px">1</span><span style="letter-spacing:-1.015px">1</span><span style="letter-spacing:-1.015px">1</span>,566.39</div>
<div class="t" id="l10" style="left:948.50px;top:559px;font-size:16px;color:#383944;font-weight:bold;letter-spacing:-0.070px;">Equity:</div>
<div class="t" id="v10" style="right:131.50px;top:558px;font-size:15.5px;color:#494a54;">$<span style="letter-spacing:-2.086px">1</span><span style="letter-spacing:-2.086px">1</span><span style="letter-spacing:-2.086px">1</span>,0<span style="letter-spacing:-2.086px">1</span>5.62</div>
<div class="t" id="l11" style="left:948.50px;top:596px;font-size:16px;color:#383944;font-weight:bold;letter-spacing:0.304px;">Account Currency:</div>
<div class="t" id="v11" style="right:132.24px;top:595px;font-size:15.5px;color:#494a54;letter-spacing:-0.736px;">USD</div>
<div class="t" id="l12" style="left:948.50px;top:652px;font-size:16px;color:#383944;font-weight:bold;letter-spacing:0.112px;">Deposits:</div>
<div class="t" id="v12" style="right:130.91px;top:652px;font-size:16px;color:#494a54;letter-spacing:0.587px;">$82,584.54</div>
<div class="t" id="l13" style="left:948.50px;top:689px;font-size:16px;color:#383944;font-weight:bold;letter-spacing:0.571px;">Withdrawals:</div>
<div class="t" id="v13" style="right:131.04px;top:689px;font-size:16px;color:#494a54;letter-spacing:0.459px;">$7,500.00</div>
<div class="t" id="l14" style="left:948.50px;top:726px;font-size:16px;color:#383944;font-weight:bold;letter-spacing:-0.068px;">Profit:</div>
<div class="t" id="v14" style="right:131.50px;top:726px;font-size:16px;color:#494a54;">$36,481.85</div>
<div class="t" id="h0" style="left:134.40px;top:946px;font-size:15.5px;color:#3a3b46;font-weight:bold;letter-spacing:0.786px;">Period</div>
<div class="t" id="h1" style="left:479.53px;transform:translateX(-50%);top:946px;font-size:15.5px;color:#3a3b46;font-weight:bold;letter-spacing:0.451px;">Profit $</div>
<div class="t" id="h2" style="left:710.87px;transform:translateX(-50%);top:946px;font-size:15.5px;color:#3a3b46;font-weight:bold;letter-spacing:0.543px;">Gain %</div>
<div class="t" id="h3" style="left:940.98px;transform:translateX(-50%);top:946px;font-size:15.5px;color:#3a3b46;font-weight:bold;letter-spacing:1.156px;">Trades</div>
<div class="t" id="h4" style="left:1158.95px;transform:translateX(-50%);top:946px;font-size:15.5px;color:#3a3b46;font-weight:bold;letter-spacing:1.100px;">Win%</div>

</div></div>
</body>
</html>
